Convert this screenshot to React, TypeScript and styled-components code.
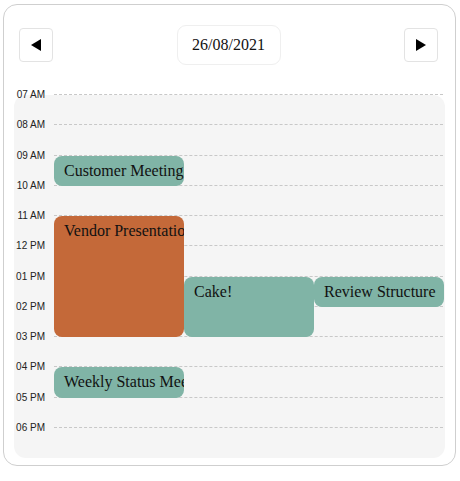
import React from "react";
import styled, { createGlobalStyle } from "styled-components";

const Global = createGlobalStyle`
  html, body { margin: 0; padding: 0; background: #fff; }
  body { font-family: "Liberation Serif", "Times New Roman", serif; }
`;

const ROW = 30.25;

const Card = styled.div`
  box-sizing: border-box;
  width: 453px;
  height: 462px;
  margin: 4px 0 0 3px;
  border: 1px solid #cfcfcf;
  border-radius: 14px;
  padding: 20px 10px 0 10px;
`;

const Header = styled.div`
  display: flex;
  align-items: center;
  justify-content: space-between;
  height: 40px;
  padding: 0 7px 0 5px;
`;

const NavButton = styled.button`
  box-sizing: border-box;
  width: 34px;
  height: 34px;
  padding: 0;
  display: flex;
  align-items: center;
  justify-content: center;
  background: #fff;
  border: 1px solid #e3e3e3;
  border-radius: 4px;
  cursor: pointer;
`;

const DateBox = styled.div`
  box-sizing: border-box;
  width: 104px;
  height: 40px;
  display: flex;
  align-items: center;
  justify-content: center;
  border: 1px solid #efefef;
  border-radius: 9px;
  font-family: "Liberation Serif", "Times New Roman", serif;
  font-size: 16px;
  color: #111;
`;

const Timeline = styled.div`
  position: relative;
  margin-top: 30px;
  background: #f5f5f5;
  border-radius: 12px;
`;

const HourRow = styled.div`
  display: grid;
  grid-template-columns: 40px 1fr;
  height: ${ROW}px;
`;

const HourLabel = styled.div`
  box-sizing: border-box;
  padding-right: 9px;
  text-align: right;
  font-family: "Liberation Sans", Arial, sans-serif;
  font-size: 10px;
  line-height: 12px;
  color: #222;
  transform: translateY(-6px);
  white-space: nowrap;
`;

const HourLine = styled.div`
  margin-right: 2px;
  border-top: 1px dashed #c8c8c8;
  margin-top: -1px;
`;

const EventLayer = styled.div`
  position: absolute;
  top: 0;
  left: 40px;
  right: 0;
  bottom: 0;
  display: grid;
  grid-template-columns: repeat(3, 130px);
  grid-template-rows: repeat(12, ${ROW}px);
`;

const Event = styled.div<{ $row: number; $span: number; $col: number; $tone: "teal" | "orange" }>`
  grid-row: ${(p) => p.$row} / span ${(p) => p.$span};
  grid-column: ${(p) => p.$col};
  box-sizing: border-box;
  background: ${(p) => (p.$tone === "teal" ? "#80b4a6" : "#c46939")};
  border-radius: 8px;
  padding: 6px 10px;
  overflow: hidden;
  white-space: nowrap;
  font-family: "Liberation Serif", "Times New Roman", serif;
  font-size: 16px;
  line-height: 18px;
  color: #111;
`;

const Tri = ({ dir }: { dir: "left" | "right" }) => (
  <svg width="10" height="12" viewBox="0 0 10 12">
    {dir === "left" ? (
      <polygon points="10,0 10,12 0,6" fill="#000" />
    ) : (
      <polygon points="0,0 0,12 10,6" fill="#000" />
    )}
  </svg>
);

const hours = [
  "07 AM", "08 AM", "09 AM", "10 AM", "11 AM", "12 PM",
  "01 PM", "02 PM", "03 PM", "04 PM", "05 PM", "06 PM",
];

const events: { title: string; row: number; span: number; col: number; tone: "teal" | "orange" }[] = [
  { title: "Customer Meeting", row: 3, span: 1, col: 1, tone: "teal" },
  { title: "Vendor Presentation", row: 5, span: 4, col: 1, tone: "orange" },
  { title: "Cake!", row: 7, span: 2, col: 2, tone: "teal" },
  { title: "Review Structure", row: 7, span: 1, col: 3, tone: "teal" },
  { title: "Weekly Status Meeting", row: 10, span: 1, col: 1, tone: "teal" },
];

export default function App() {
  return (
    <>
      <Global />
      <Card>
        <Header>
          <NavButton aria-label="previous day">
            <Tri dir="left" />
          </NavButton>
          <DateBox>26/08/2021</DateBox>
          <NavButton aria-label="next day">
            <Tri dir="right" />
          </NavButton>
        </Header>
        <Timeline>
          {hours.map((h) => (
            <HourRow key={h}>
              <HourLabel>{h}</HourLabel>
              <HourLine />
            </HourRow>
          ))}
          <EventLayer>
            {events.map((e) => (
              <Event key={e.title} $row={e.row} $span={e.span} $col={e.col} $tone={e.tone}>
                {e.title}
              </Event>
            ))}
          </EventLayer>
        </Timeline>
      </Card>
    </>
  );
}
